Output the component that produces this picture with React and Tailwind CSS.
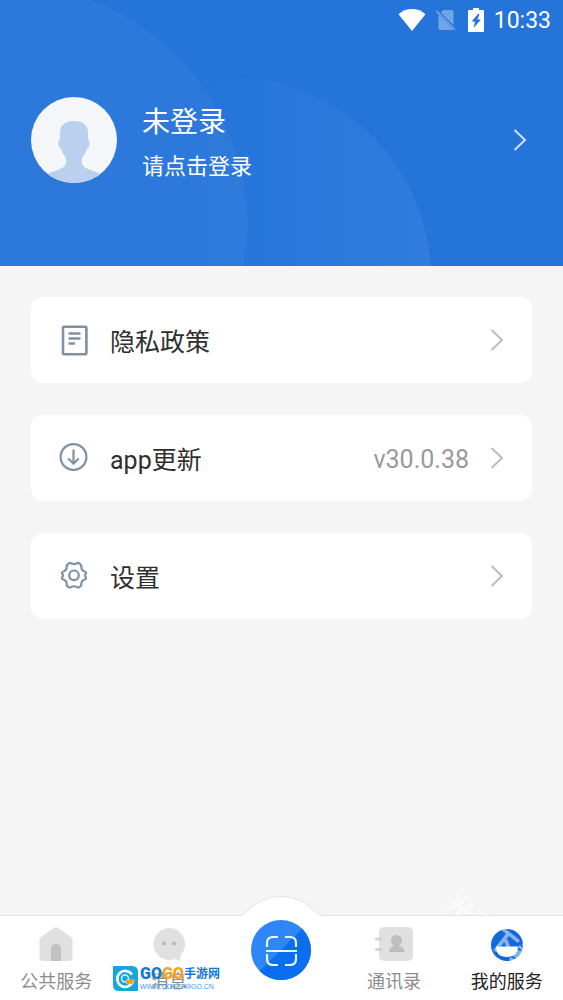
import React, { useState } from "react";

const FONT = "font-[Roboto,'Noto_Sans_CJK_SC',sans-serif]";

function Chevron({ className }) {
  return (
    <svg viewBox="0 0 14 24" className={`w-[14px] h-6 ${className}`} fill="none" stroke="currentColor" strokeWidth="2">
      <path d="M1.5 2 12 12 1.5 22" />
    </svg>
  );
}

function StatusBar() {
  return (
    <div className="relative flex items-center justify-end h-10 pr-3 text-white">
      <svg viewBox="0 0 28 22" className="w-7 h-[22px]" fill="currentColor">
        <path d="M14 22 .5 5.200C4 1.800 9 0 14 0s10 1.800 13.500 5.200z" />
      </svg>
      <svg viewBox="0 0 20 22" className="w-5 h-[22px] ml-[10px] opacity-35" fill="currentColor">
        <path d="M7.500 1H16q1.500 0 1.500 1.500v13.800L4.800 3.600z" />
        <path d="M2.500 5.500 17 20.500q-.5.500-1 .5H4q-1.500 0-1.500-1.500z" />
        <path d="M1.200 1.500 19.500 20.200l-1.200 1.200L0 2.700z" />
      </svg>
      <svg viewBox="0 0 16 24" className="w-4 h-6 ml-3" fill="currentColor">
        <path fillRule="evenodd" d="M5 0h6v2h4q1 0 1 1v20q0 1-1 1H1q-1 0-1-1V3q0-1 1-1h4zM10 6 3.500 13.500H7L5.500 20l7.500-8.500H9.500L11.500 6z" />
      </svg>
      <span className="ml-[10px] pt-[2px] text-[23px] leading-8">10:33</span>
    </div>
  );
}

function Avatar() {
  return (
    <svg viewBox="0 0 86 86" className="w-[86px] h-[86px] rounded-full shrink-0">
      <rect width="86" height="86" fill="#f5f6f8" />
      <path
        d="M43 24c-9 0-14 4-14 12v7c-2 0-2 3-1 6 .5 2 1.500 3 2.500 3.500C31.500 57 34 59 35 61c1 6-1 8-4 10-5 3-9 3-15 6v9h54v-9c-6-3-10-3-15-6-3-2-5-4-4-10 1-2 3.500-4 4.500-8.500 1-.5 2-1.500 2.500-3.500 1-3 1-6-1-6v-7c0-8-5-12-14-12z"
        fill="#bbd0ee"
      />
    </svg>
  );
}

function DocIcon() {
  return (
    <svg viewBox="0 0 30 32" className="w-[30px] h-8" fill="none" stroke="#8290a5" strokeWidth="2.600">
      <rect x="4" y="2.800" width="23.400" height="27.400" rx="1" />
      <path d="M9.500 9.500h12M9.500 14.500h12M9.500 19.500h6.500" />
    </svg>
  );
}

function DownloadIcon() {
  return (
    <svg viewBox="0 0 30 32" className="w-[30px] h-8" fill="none" stroke="#8290a5" strokeWidth="2.200">
      <circle cx="14.500" cy="15" r="12.900" />
      <path d="M14.500 7.500v14M9.300 16.500l5.200 5.200 5.200-5.200" />
    </svg>
  );
}

function GearIcon() {
  return (
    <svg viewBox="0 0 30 32" className="w-[30px] h-8" fill="none" stroke="#8290a5" strokeWidth="2.200" strokeLinejoin="round">
      <path d="M9.500 3.500q1.200-1 2.600-.2Q15 5 17.900 3.300q1.400-.8 2.600.2 2 1.300 2 4.500 0 2.200 2.600 3.200 2 .8 2 1.600 0 .8-.8 1.700-.8 1 0 2 .8.900.8 1.700 0 .8-2 1.600-2.600 1-2.600 3.200 0 3.200-2 4.100-1.200.8-2.600 0-2.900-1.700-5.800 0-1.400.8-2.600 0-2-.9-2-4.100 0-2.200-2.600-3.200-2-.8-2-1.600 0-.8.8-1.700.8-1 0-2-.8-.9-.8-1.700 0-.8 2-1.600Q7.500 10.200 7.500 8 7.500 4.800 9.500 3.500z" />
      <circle cx="15" cy="15.300" r="4.800" />
    </svg>
  );
}

function HomeIcon() {
  return (
    <svg viewBox="0 0 34 34" className="w-[34px] h-[34px]">
      <path d="M14.500 1.200q2.500-1.700 5 0L32 10q1.500 1 1.500 3v17q0 4-4 4h-25q-4 0-4-4V13q0-2 1.500-3z" fill="#e0e0e0" />
      <path d="M12 34V22q0-5 5-5t5 5v12z" fill="#c2c2c2" />
    </svg>
  );
}

function ChatIcon() {
  return (
    <svg viewBox="0 0 34 34" className="w-[34px] h-[34px]">
      <path d="M17 1a16 16 0 1 0 6 31q2 1 6 2-1.500-3 0-6.500A16 16 0 0 0 17 1z" fill="#e0e0e0" />
      <circle cx="12" cy="16.500" r="2" fill="#b8b8b8" />
      <circle cx="22" cy="16.500" r="2" fill="#b8b8b8" />
    </svg>
  );
}

function ContactsIcon() {
  return (
    <svg viewBox="0 0 38 34" className="w-[38px] h-[34px]">
      <rect x="4" width="34" height="34" rx="5" fill="#e0e0e0" />
      <path d="M1.500 12h4.500M1.500 22.500h4.500" stroke="#d4d4d4" strokeWidth="3" strokeLinecap="round" />
      <circle cx="21.500" cy="13.500" r="5.500" fill="#bebebe" />
      <path d="M14 25q0-5 5-6v-3h5v3q5.500 1 5.500 6z" fill="#bebebe" />
    </svg>
  );
}

function MineIcon() {
  return (
    <svg viewBox="0 0 34 34" className="w-[34px] h-[34px]">
      <circle cx="17" cy="18" r="16" fill="#1368dc" />
      <path d="M6 19.500h22q0 10.500-11 10.500T6 19.500z" fill="#fff" />
    </svg>
  );
}

function ScanIcon() {
  return (
    <svg viewBox="0 0 60 60" className="w-[60px] h-[60px] rounded-full">
      <rect width="60" height="60" fill="#2f86f6" />
      <path d="M60 0v60H0z" fill="#0b6df0" />
      <g fill="none" stroke="#e8fbff" strokeWidth="2.200">
        <path d="M27 17h-5q-6 0-6 6v4M34 17h5q6 0 6 6v4M16 34v5q0 6 6 6h5M45 34v5q0 6-6 6h-5M15 31h31" />
      </g>
    </svg>
  );
}

function MenuRow({ icon, label, value }) {
  return (
    <button className="flex items-center w-full h-[86px] px-7 bg-white rounded-xl text-left">
      {icon}
      <span className="ml-[21px] pt-[5px] text-[25px] leading-9 text-[#2f2f2f]">{label}</span>
      <span className="ml-auto mr-[21px] pt-[3px] text-[25px] leading-9 text-[#999]">{value}</span>
      <Chevron className="text-[#bdbdbd]" />
    </button>
  );
}

function TabItem({ icon, label, active, onClick }) {
  return (
    <button onClick={onClick} className="flex flex-col items-center pt-[11px]">
      {icon}
      <span className={`mt-[5px] text-[18px] leading-8 whitespace-nowrap ${active ? "text-[#222]" : "text-[#8c8c8c]"}`}>
        {label}
      </span>
    </button>
  );
}

function GogoMark() {
  return (
    <div className="absolute left-[113px] bottom-[9px] flex items-center gap-[2px] pointer-events-none">
      <svg viewBox="0 0 25 25" className="w-[25px] h-[25px]">
        <path d="M0 0h19q6 0 6 6v19H6q-6 0-6-6z" fill="#18a5dc" />
        <path d="M19 8.500A8 8 0 1 0 20 15h-7" fill="none" stroke="#fff" strokeWidth="2.500" />
        <circle cx="12" cy="12.500" r="3.500" fill="none" stroke="#d8f2fb" strokeWidth="1.500" />
        <path d="M13 14h9l-3 4h-6z" fill="#f6a51c" />
      </svg>
      <div className="flex flex-col">
        <div className="flex items-center h-[18px] leading-4">
          <span className="font-black text-[16px] text-[#1279d4]">GO</span>
          <span className="font-black text-[16px] text-[#f9a21a]">GO</span>
          <span className="font-bold text-[12px] text-[#1279d4]">手游网</span>
        </div>
        <span className="font-['Liberation_Sans'] text-[7px] leading-2 text-[#3f9ddd]">WWW.GOGO49GO.CN</span>
      </div>
    </div>
  );
}

export default function App() {
  const [tab, setTab] = useState("mine");

  return (
    <div className={`min-h-screen flex flex-col bg-[#f5f5f5] ${FONT}`}>
      <header className="relative overflow-hidden h-[266px] bg-[#2474da]">
        {/* soft background discs */}
        <div className="absolute -left-[233px] -top-[15px] w-[480px] h-[480px] rounded-full bg-white/4" />
        <div className="absolute left-[31px] top-[78px] w-[400px] h-[400px] rounded-full bg-linear-to-r from-white/0 from-40% to-white/6" />
        <StatusBar />
        <button className="relative flex items-center w-full pl-[31px] pr-9 mt-[57px] text-left text-white">
          <Avatar />
          <span className="flex flex-col gap-2 ml-[25px] pt-[5px]">
            <span className="text-[28px] leading-10">未登录</span>
            <span className="text-[22px] leading-8">请点击登录</span>
          </span>
          <Chevron className="ml-auto text-[#cfe0f8]" />
        </button>
      </header>

      <main className="flex-1 flex flex-col gap-8 px-[31px] pt-[31px] pb-8">
        <MenuRow icon={<DocIcon />} label="隐私政策" />
        <MenuRow icon={<DownloadIcon />} label="app更新" value="v30.0.38" />
        <MenuRow icon={<GearIcon />} label="设置" />
      </main>

      <nav className="sticky bottom-0 grid grid-cols-5 h-[85px] bg-white border-t border-[#e3e3e3]">
        <TabItem icon={<HomeIcon />} label="公共服务" active={tab === "home"} onClick={() => setTab("home")} />
        <TabItem icon={<ChatIcon />} label="消息" active={tab === "chat"} onClick={() => setTab("chat")} />
        <div className="relative flex justify-center">
          <svg viewBox="0 0 84 26" className="absolute -top-5 w-[84px] h-[26px]">
            <path d="M0 19.500q5 0 9-5Q23 .5 42 .5t33 14q4 5 9 5V26H0z" fill="#fff" />
            <path d="M0 19.500q5 0 9-5Q23 .5 42 .5t33 14q4 5 9 5" fill="none" stroke="#e3e3e3" />
          </svg>
          <button aria-label="扫一扫" className="relative self-start mt-1">
            <ScanIcon />
          </button>
        </div>
        <TabItem icon={<ContactsIcon />} label="通讯录" active={tab === "contacts"} onClick={() => setTab("contacts")} />
        <TabItem icon={<MineIcon />} label="我的服务" active={tab === "mine"} onClick={() => setTab("mine")} />
        <GogoMark />
        <span className="absolute right-4 bottom-[50px] rotate-38 text-[28px] leading-8 font-bold text-white/50 pointer-events-none">
          光子下载
        </span>
      </nav>
    </div>
  );
}
